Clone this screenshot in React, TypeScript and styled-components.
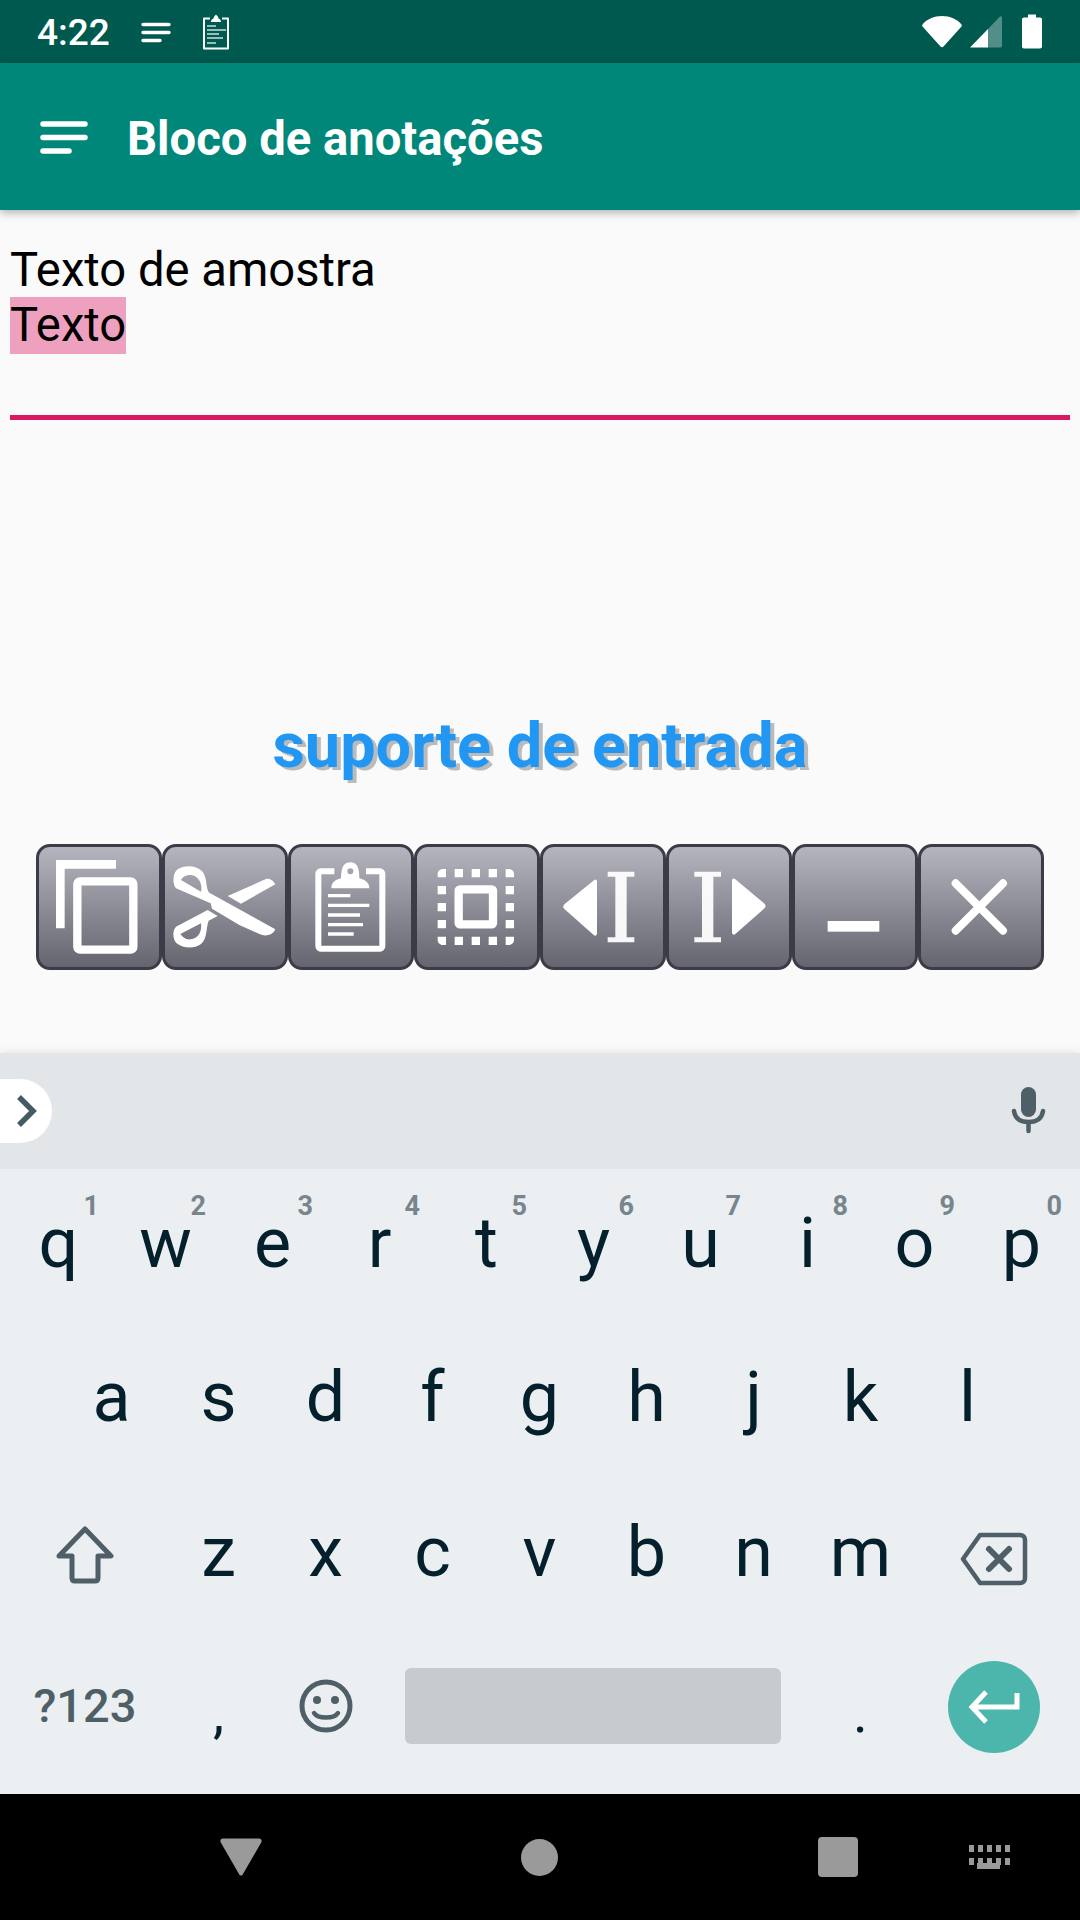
import React from "react";
import styled, { createGlobalStyle } from "styled-components";

const GlobalStyle = createGlobalStyle`
  html, body { margin: 0; padding: 0; background: #fafafa; }
  * { box-sizing: border-box; }
  body { font-family: Roboto, "Liberation Sans", sans-serif; }
`;

const ROW1 = [
  ["q", "1"], ["w", "2"], ["e", "3"], ["r", "4"], ["t", "5"],
  ["y", "6"], ["u", "7"], ["i", "8"], ["o", "9"], ["p", "0"],
];
const ROW2 = ["a", "s", "d", "f", "g", "h", "j", "k", "l"];
const ROW3 = ["z", "x", "c", "v", "b", "n", "m"];

export default function App() {
  return (
    <Screen>
      <GlobalStyle />
      <StatusBar>
        <StatusLeft>
          <Time>4:22</Time>
          <svg width="30" height="22" viewBox="0 0 30 22">
            <g stroke="#fff" strokeWidth="3.4" strokeLinecap="round">
              <path d="M2 3.5H28M2 11.5H28M2 19.5H19" />
            </g>
          </svg>
          <svg width="28" height="36" viewBox="0 0 28 36">
            <path d="M8 4.5H2V34.5H26V4.5H20" fill="none" stroke="#fff" strokeWidth="2" strokeLinejoin="round" />
            <path d="M9 8C9 6 10 5 11.5 4.5C12 2.5 13 1 14 1C15 1 16 2.5 16.500 4.500C18 5 19 6 19 8Z" fill="#fff" />
            <g stroke="#fff" strokeWidth="1.400" opacity="0.8">
              <path d="M5 12H14M5 16H24M5 20H17M5 24H21M5 29H14" />
            </g>
          </svg>
        </StatusLeft>
        <StatusRight>
          <svg width="42" height="34" viewBox="0 0 42 34">
            <path d="M1.500 9.500C6 4 13 1 21 1C29 1 36 4 40.500 9.500C41 10.200 41 10.800 40.500 11.500L22.500 31.500C21.700 32.500 20.300 32.500 19.500 31.500L1.500 11.500C1 10.800 1 10.200 1.500 9.500Z" fill="#fff" />
          </svg>
          <svg width="32" height="34" viewBox="0 0 32 34">
            <path d="M0 32.500L18 14V32.500H1C0 32.500 0 32.500 0 32.500Z" fill="#fff" />
            <path d="M18 14L30 1.500C31 1 32 1.500 32 3V30.500C32 32 31 32.500 30 32.500H18Z" fill="#fff" opacity="0.32" />
          </svg>
          <svg width="20" height="35" viewBox="0 0 20 35">
            <path d="M6 0.500H14V3.500H18C19.200 3.500 20 4.300 20 5.500V32.500C20 33.700 19.200 34.500 18 34.500H2C0.800 34.500 0 33.700 0 32.500V5.500C0 4.300 0.800 3.500 2 3.500H6Z" fill="#fff" />
          </svg>
        </StatusRight>
      </StatusBar>

      <AppBar>
        <svg width="48" height="34" viewBox="0 0 48 34">
          <path d="M3 4H45M3 17.500H45M3 31H29" stroke="#fff" strokeWidth="5.500" strokeLinecap="round" />
        </svg>
        <Title>Bloco de anotações</Title>
      </AppBar>

      <Content>
        <Editor>
          <EditorLine>Texto de amostra</EditorLine>
          <EditorLine><Selected>Texto</Selected></EditorLine>
        </Editor>
        <Support>suporte de entrada</Support>
        <Toolbar>
          <ToolButton>
            <svg viewBox="57 51 360 360">
              <path d="M108 90H288V116H134V295H108Z" fill="#fff" />
              <rect x="172" y="154" width="168" height="205" rx="8" fill="none" stroke="#fff" strokeWidth="25" />
            </svg>
          </ToolButton>
          <ToolButton>
            <svg viewBox="437 51 360 360">
              <path fillRule="evenodd" fill="#fff" d="M470 175C460 165 458 130 475 118C495 104 530 105 550 125C565 145 558 175 570 188L768 298C760 318 735 320 720 312L660 285L578 236L574 220ZM485 150L545 185C550 165 540 138 515 135C500 133 490 140 485 150Z" />
              <path fillRule="evenodd" fill="#fff" d="M470 290L565 240L595 258L568 272C560 290 565 325 545 342C525 358 490 355 472 340C458 325 460 300 470 290ZM483 312C490 322 500 330 515 328C540 325 548 300 545 280Z" />
              <path fill="#fff" d="M625 198L740 147C752 143 762 152 768 163L665 221Z" />
            </svg>
          </ToolButton>
          <ToolButton>
            <svg viewBox="815 51 360 360">
              <path d="M945 124H904C900 124 897 127 897 131V349C897 353 900 356 904 356H1082C1086 356 1089 353 1089 349V131C1089 127 1086 124 1082 124H1040" fill="none" stroke="#fff" strokeWidth="18" />
              <path fillRule="evenodd" fill="#fff" d="M965 145C965 110 975 97 993 97C1011 97 1020 110 1020 145C1040 150 1050 160 1050 175H936C936 160 945 150 965 145ZM993 115A9 9 0 1 0 993 133A9 9 0 1 0 993 115Z" />
              <path d="M926 197H993M926 226H1050M926 255H1022M926 284H1031M926 312H1003" stroke="#fff" strokeWidth="10" />
            </svg>
          </ToolButton>
          <ToolButton>
            <svg viewBox="1195 51 360 360">
              <path fill="#fff" d="M1282 117V142H1257V132C1257 124 1264 117 1272 117ZM1461 117H1471C1479 117 1486 124 1486 132V142H1461ZM1257 320H1282V345H1272C1264 345 1257 338 1257 330ZM1461 320H1486V330C1486 338 1479 345 1471 345H1461Z" />
              <path fill="#fff" d="M1308 117h25v25h-25zM1359 117h25v25h-25zM1410 117h25v25h-25zM1308 320h25v25h-25zM1359 320h25v25h-25zM1410 320h25v25h-25zM1257 168h25v25h-25zM1257 219h25v25h-25zM1257 270h25v25h-25zM1461 168h25v25h-25zM1461 219h25v25h-25zM1461 270h25v25h-25z" />
              <rect x="1320" y="178" width="103" height="105" rx="4" fill="none" stroke="#fff" strokeWidth="25" />
            </svg>
          </ToolButton>
          <ToolButton>
            <svg viewBox="41 51 360 360">
              <path d="M195 150C200 146 203 150 203 155V310C203 316 198 320 193 315L106 238C100 232 100 228 106 222Z" fill="#fff" />
              <path d="M235 125H315V140H292V322H315V337H235V322H258V140H235Z" fill="#fff" opacity="0.94" />
            </svg>
          </ToolButton>
          <ToolButton>
            <svg viewBox="414 51 360 360">
              <path d="M612 147C607 143 603 147 603 152V307C603 313 608 317 613 312L699 236C705 230 705 226 699 220Z" fill="#fff" />
              <path d="M490 125H570V140H547V322H570V337H490V322H513V140H490Z" fill="#fff" opacity="0.94" />
            </svg>
          </ToolButton>
          <ToolButton>
            <svg viewBox="787 51 360 360">
              <rect x="885" y="273" width="155" height="32" fill="#fff" />
            </svg>
          </ToolButton>
          <ToolButton>
            <svg viewBox="1159 51 360 360">
              <path d="M1263 160L1405 302M1405 160L1263 302" stroke="#fff" strokeWidth="24" strokeLinecap="round" />
            </svg>
          </ToolButton>
        </Toolbar>
      </Content>

      <Keyboard>
        <Strip>
          <ExpandPill>
            <svg width="24" height="36" viewBox="0 0 24 36">
              <path d="M4 4L18 18L4 32" fill="none" stroke="#455a64" strokeWidth="5.500" />
            </svg>
          </ExpandPill>
          <svg width="36" height="48" viewBox="0 0 36 48">
            <rect x="11" y="0" width="15" height="30" rx="7.500" fill="#4f5f67" />
            <path d="M4 24C5 31 10 35 18.500 35C27 35 32 31 33 24" fill="none" stroke="#4f5f67" strokeWidth="4.500" strokeLinecap="round" />
            <path d="M18.500 36V44" stroke="#4f5f67" strokeWidth="4.500" strokeLinecap="round" />
          </svg>
        </Strip>
        <Keys>
          <KeyRow $inset={5} $lift={6}>
            {ROW1.map(([k, n]) => (
              <Key key={k}>{k}<Hint>{n}</Hint></Key>
            ))}
          </KeyRow>
          <KeyRow $inset={58} $lift={3}>
            {ROW2.map((k) => <Key key={k}>{k}</Key>)}
          </KeyRow>
          <KeyRow $inset={5}>
            <WideKey $drop={7}>
              <svg width="60" height="58" viewBox="0 0 60 58">
                <path d="M30 3L56 30H43V52C43 54 42 55 40 55H20C18 55 17 54 17 52V30H4Z" fill="none" stroke="#4f5f67" strokeWidth="5" strokeLinejoin="round" />
              </svg>
            </WideKey>
            {ROW3.map((k) => <Key key={k}>{k}</Key>)}
            <WideKey $drop={14}>
              <svg width="68" height="54" viewBox="0 0 68 54">
                <path d="M20 3H60C63 3 65 5 65 8V46C65 49 63 51 60 51H20L3 27Z" fill="none" stroke="#4f5f67" strokeWidth="4.500" strokeLinejoin="round" />
                <path d="M29 17L49 37M49 17L29 37" stroke="#4f5f67" strokeWidth="6" strokeLinecap="round" />
              </svg>
            </WideKey>
          </KeyRow>
          <KeyRow $inset={5}>
            <SymbolKey $drop={2}>?123</SymbolKey>
            <PunctKey>,</PunctKey>
            <Key $drop={2}>
              <svg width="54" height="54" viewBox="0 0 54 54">
                <circle cx="27" cy="27" r="24" fill="none" stroke="#4f5f67" strokeWidth="5" />
                <circle cx="18" cy="21" r="4" fill="#4f5f67" />
                <circle cx="36" cy="21" r="4" fill="#4f5f67" />
                <path d="M15 34C19 40 35 40 39 34" fill="none" stroke="#4f5f67" strokeWidth="4.500" strokeLinecap="round" />
              </svg>
            </Key>
            <SpaceKey><SpaceBar /></SpaceKey>
            <PunctKey>.</PunctKey>
            <WideKey $drop={4}>
              <EnterCircle>
                <svg width="52" height="34" viewBox="0 0 52 34">
                  <path d="M49 3V17H4M18 2L4 17L18 32" fill="none" stroke="#fff" strokeWidth="5" />
                </svg>
              </EnterCircle>
            </WideKey>
          </KeyRow>
        </Keys>
      </Keyboard>

      <NavBar>
        <svg width="42" height="38" viewBox="0 0 42 38">
          <path d="M3 0.500H39C41 0.500 42 2 41.500 4L23 36C22 38 20 38 19 36L0.500 4C0 2 1 0.500 3 0.500Z" fill="#9a9a9a" />
        </svg>
        <HomeDot />
        <RecentSquare />
        <KeyboardGlyph>
          <svg width="42" height="24" viewBox="0 0 42 24">
            <path fill="#9a9a9a" d="M1 0h5v7H1zM10 0h5v7h-5zM19 0h5v7h-5zM28 0h5v7h-5zM37 0h5v7h-5zM1 13h5v7H1zM10 13h5v7h-5zM19 13h5v7h-5zM28 13h5v7h-5zM37 13h5v7h-5z" />
          </svg>
          <SpaceGlyph />
        </KeyboardGlyph>
      </NavBar>
    </Screen>
  );
}

const Screen = styled.div`
  width: 1080px;
  height: 1920px;
  display: flex;
  flex-direction: column;
  background: #fafafa;
  overflow: hidden;
`;

const StatusBar = styled.div`
  height: 63px;
  flex: none;
  background: #00594f;
  color: #fff;
  display: flex;
  align-items: center;
  justify-content: space-between;
  padding: 0 38px 0 37px;
`;

const StatusLeft = styled.div`
  display: flex;
  align-items: center;
  gap: 31px;
`;

const Time = styled.span`
  font-size: 37px;
  font-weight: 500;
  line-height: 1;
  padding-top: 2px;
`;

const StatusRight = styled.div`
  display: flex;
  align-items: center;
  gap: 7px;

  svg:last-child {
    margin-left: 13px;
  }
`;

const AppBar = styled.div`
  height: 147px;
  flex: none;
  background: #00877a;
  display: flex;
  align-items: center;
  gap: 39px;
  padding: 0 0 0 40px;
  position: relative;
  z-index: 2;
  box-shadow: 0 3px 8px rgba(0, 0, 0, 0.28);
`;

const Title = styled.h1`
  margin: 0;
  padding-top: 6px;
  color: #fff;
  font-size: 47.2px;
  font-weight: 700;
  line-height: 1;
`;

const Content = styled.div`
  flex: 1;
  display: flex;
  flex-direction: column;
  background: #fafafa;
  padding: 0;
`;

const Editor = styled.div`
  margin: 32px 10px 0;
  height: 178px;
  border-bottom: 5px solid #d81b60;
`;

const EditorLine = styled.div`
  font-size: 47.2px;
  line-height: 57px;
  color: #000;
  height: 55px;
`;

const Selected = styled.span`
  display: inline-block;
  background: #eea1be;
  height: 57px;
`;

const Support = styled.div`
  margin-top: 291px;
  text-align: center;
  font-size: 63px;
  font-weight: 700;
  line-height: 70px;
  color: #2196f3;
  text-shadow: 4px 3px 0 #bbb;
`;

const Toolbar = styled.div`
  margin-top: 63px;
  padding: 0 36px;
  display: grid;
  grid-template-columns: repeat(8, 126px);
`;

const ToolButton = styled.div`
  width: 126px;
  height: 126px;
  border: 3px solid #3c3c48;
  border-radius: 14px;
  background: linear-gradient(#b5b5bf, #65656f);

  svg {
    display: block;
    width: 120px;
    height: 120px;
  }
`;

const Keyboard = styled.div`
  flex: none;
  height: 741px;
  display: flex;
  flex-direction: column;
  background: #ebeff2;
  position: relative;
  box-shadow: 0 -2px 6px rgba(0, 0, 0, 0.08);
`;

const Strip = styled.div`
  height: 116px;
  flex: none;
  background: #e3e6e9;
  display: flex;
  align-items: center;
  justify-content: space-between;
  padding: 0 34px 0 0;
`;

const ExpandPill = styled.div`
  width: 52px;
  height: 64px;
  background: #fff;
  border-radius: 0 32px 32px 0;
  display: flex;
  align-items: center;
  padding-left: 15px;
`;

const Keys = styled.div`
  flex: 1;
  display: grid;
  grid-template-rows: repeat(4, 153px);
  padding-bottom: 13px;
`;

const KeyRow = styled.div<{ $inset: number; $lift?: number }>`
  display: flex;
  padding: 0 ${(p) => p.$inset}px ${(p) => p.$lift ?? 0}px;
`;

const Key = styled.div<{ $drop?: number }>`
  width: 107px;
  flex: none;
  position: relative;
  display: flex;
  align-items: center;
  justify-content: center;
  font-size: 70px;
  color: #04202c;
  line-height: 1;
  padding-top: ${(p) => p.$drop ?? 0}px;
`;

const Hint = styled.span`
  position: absolute;
  top: 24px;
  right: 13px;
  font-size: 27px;
  font-weight: 700;
  line-height: 1;
  color: #78858d;
`;

const WideKey = styled(Key)`
  width: 160px;
`;

const SymbolKey = styled(WideKey)`
  font-size: 47px;
  font-weight: 500;
  color: #4f5f67;
`;

const PunctKey = styled(Key)`
  font-size: 56px;
  padding-top: 16px;
`;

const SpaceKey = styled.div`
  width: 428px;
  flex: none;
  display: flex;
  align-items: center;
  padding: 2px 26px 0;
`;

const SpaceBar = styled.div`
  width: 100%;
  height: 76px;
  border-radius: 6px;
  background: #c8cbce;
`;

const EnterCircle = styled.div`
  width: 92px;
  height: 92px;
  border-radius: 50%;
  background: #4db6ac;
  display: flex;
  align-items: center;
  justify-content: center;
`;

const NavBar = styled.div`
  height: 126px;
  flex: none;
  background: #000;
  display: flex;
  align-items: center;
  padding-left: 220px;
`;

const HomeDot = styled.div`
  width: 37px;
  height: 37px;
  margin-left: 259px;
  border-radius: 50%;
  background: #9a9a9a;
`;

const RecentSquare = styled.div`
  width: 40px;
  height: 40px;
  margin-left: 260px;
  border-radius: 4px;
  background: #9a9a9a;
`;

const KeyboardGlyph = styled.div`
  width: 42px;
  height: 24px;
  margin-left: 110px;
  position: relative;

  svg {
    display: block;
  }
`;

const SpaceGlyph = styled.div`
  position: absolute;
  left: 9px;
  bottom: 0;
  width: 23px;
  height: 6px;
  background: #9a9a9a;
`;
